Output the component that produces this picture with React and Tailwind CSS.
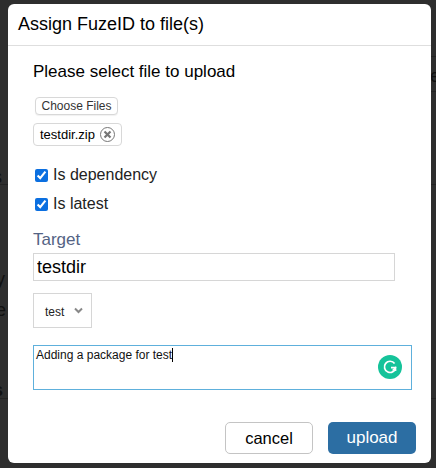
import { useState } from 'react'

function GrammarlyBadge() {
  return (
    <div className="absolute right-[9px] top-[9px] w-6 h-6 rounded-full bg-[#15c39a] flex items-center justify-center">
      <svg width="16" height="16" viewBox="0 0 16 16" fill="none" stroke="white" strokeWidth="1.7">
        <path d="M12.6 4.6A5.6 5.6 0 1 0 13.6 8.6H9" />
        <path d="M10.6 11.4l2.8-2.6 0.4 3" strokeWidth="1.4" />
      </svg>
    </div>
  )
}

export default function App() {
  const [dep, setDep] = useState(true)
  const [latest, setLatest] = useState(true)

  return (
    <div className="relative w-[436px] h-[468px] overflow-hidden bg-[#2e2e2e] font-['Liberation_Sans',sans-serif]">
      {/* page behind the dialog */}
      <div className="absolute left-0 top-[184px] w-full border-t border-[#232323]" />
      <div className="absolute left-0 top-[398px] w-full border-t border-[#232323]" />
      <div className="absolute right-0 top-[56px] w-[10px] border-t border-[#232323]" />
      <div className="absolute right-0 top-[91px] w-[10px] border-t border-[#232323]" />
      <span className="absolute left-[-7px] top-[163px] text-lg text-[#111]">s</span>
      <span className="absolute left-[-4px] top-[265px] text-lg text-[#111]">y</span>
      <span className="absolute left-[-4px] top-[296px] text-lg text-[#111]">e</span>
      <span className="absolute left-[-7px] top-[376px] text-lg font-bold text-[#111]">s</span>
      <span className="absolute left-[430px] top-[62px] text-lg text-[#111]">e</span>

      {/* dialog */}
      <div className="absolute left-2 top-1 w-[423px] h-[459px] bg-white rounded-md flex flex-col text-black">
        <div className="h-[42px] pl-[10px] flex items-center border-b border-[#dedede] text-[18px]">
          Assign FuzeID to file(s)
        </div>

        <div className="flex flex-col pl-[25px] pr-[19px]">
          <p className="mt-[17px] text-[17px] leading-[18px]">Please select file to upload</p>

          <button className="mt-[16px] ml-[2px] self-start h-[18px] w-[83px] rounded-[4px] border border-[#d8d8d8] bg-white text-[12px] leading-none text-[#333] shadow-[0_1px_1px_rgba(0,0,0,0.06)]">
            Choose Files
          </button>

          <div className="mt-[8px] self-start h-[23px] pl-[6px] pr-[6px] rounded-[4px] border border-[#d8d8d8] flex items-center gap-[5px] text-[13px]">
            testdir.zip
            <span className="w-[15px] h-[15px] rounded-full border border-[#777] flex items-center justify-center">
              <svg width="9" height="9" viewBox="0 0 9 9" stroke="#777" strokeWidth="2.2">
                <path d="M1.5 1.5l6 6M7.5 1.5l-6 6" />
              </svg>
            </span>
          </div>

          <label className="mt-[20px] h-[18px] flex items-center text-base text-[#222]">
            <input
              type="checkbox"
              checked={dep}
              onChange={() => setDep(!dep)}
              className="ml-[2px] mr-[5px] w-[13px] h-[13px] accent-[#0b6fe0]"
            />
            Is dependency
          </label>
          <label className="mt-[11px] h-[18px] flex items-center text-base text-[#222]">
            <input
              type="checkbox"
              checked={latest}
              onChange={() => setLatest(!latest)}
              className="ml-[2px] mr-[5px] w-[13px] h-[13px] accent-[#0b6fe0]"
            />
            Is latest
          </label>

          <div className="mt-[18px] text-[17px] leading-[18px] text-[#546384]">Target</div>
          <input
            defaultValue="testdir"
            className="mt-[4px] w-[362px] h-[28px] px-[3px] border border-[#d6d6d6] text-[18px] outline-none"
          />

          <div className="mt-[12px] w-[59px] h-[35px] border border-[#d6d6d6] flex items-center pl-[11px] gap-[10px] text-[12px] text-[#222]">
            <span className="mt-[2px]">test</span>
            <svg className="mb-[1px]" width="9" height="7" viewBox="0 0 9 7" fill="none" stroke="#888" strokeWidth="2">
              <path d="M1 1.5l3.5 3.5L8 1.5" />
            </svg>
          </div>

          <div className="relative mt-[17px] w-[379px] h-[45px] border border-[#5eb0dc] pl-[2px] pt-[2px] text-[12px] leading-[14px] text-[#111]">
            <span className="border-r border-black">Adding a package for test</span>
            <GrammarlyBadge />
          </div>
        </div>

        <div className="mt-[32px] flex justify-end gap-[15px] pr-[15px]">
          <button className="w-[88px] h-[32px] rounded-[5px] border border-[#c4c4c4] bg-white text-[16.5px] text-black">
            cancel
          </button>
          <button className="w-[88px] h-[32px] rounded-[5px] bg-[#2c6ea3] text-[17px] font-medium text-white">
            upload
          </button>
        </div>
      </div>
    </div>
  )
}
